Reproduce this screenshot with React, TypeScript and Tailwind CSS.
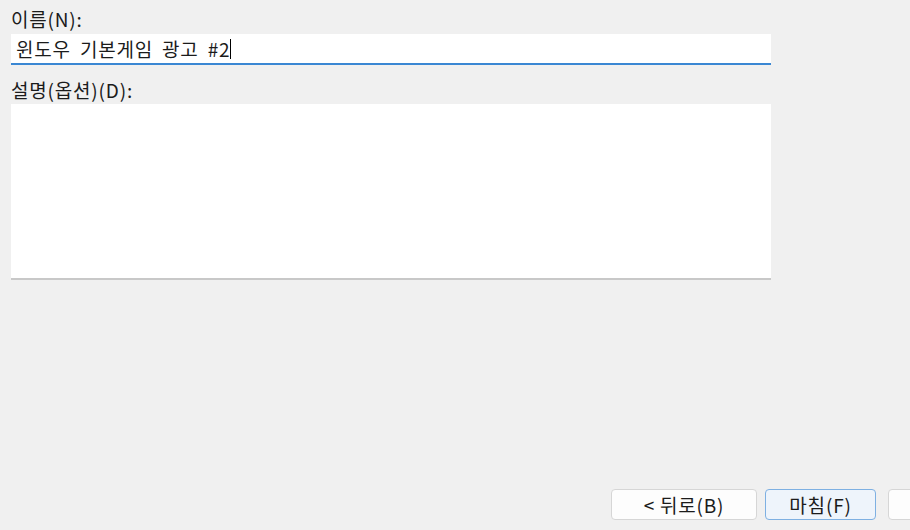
import React from "react";

const font = { fontFamily: '"Noto Sans CJK KR", "Noto Sans", sans-serif' };

export default function App() {
  return (
    <div
      className="w-[910px] h-[530px] bg-[#f0f0f0] flex flex-col overflow-hidden text-[#1b1b1b] text-[19px] tracking-[0.8px]"
      style={font}
    >
      {/* Form */}
      <div className="pl-[11px] w-[771px] pt-[8px] flex flex-col">
        <label className="leading-[22px]">이름(N):</label>
        <div className="mt-[4px] h-[31px] bg-white border-b-2 border-[#3a87d3] flex items-center pl-[5px]">
          <span className="leading-[22px] [word-spacing:4px]">윈도우 기본게임 광고 #2</span>
          <span className="w-px h-[20px] bg-black"></span>
        </div>
        <label className="mt-[14px] leading-[22px]">설명(옵션)(D):</label>
        <div className="mt-[3px] h-[176px] bg-white border-b-2 border-[#c8c8c8]"></div>
      </div>

      {/* Buttons */}
      <div className="mt-auto flex pl-[611px] pb-[10px] gap-[8px]">
        <button className="shrink-0 w-[146px] h-[31px] rounded-[4px] bg-[#fdfdfd] border border-[#d6d6d6] leading-[22px]">
          &lt; 뒤로(B)
        </button>
        <button className="shrink-0 w-[111px] h-[31px] rounded-[4px] bg-[#eef4fb] border border-[#7eb0e2] leading-[22px]">
          마침(F)
        </button>
        <button className="shrink-0 ml-[4px] w-[146px] h-[31px] rounded-[4px] bg-[#fdfdfd] border border-[#d6d6d6] leading-[22px]"></button>
      </div>
    </div>
  );
}
